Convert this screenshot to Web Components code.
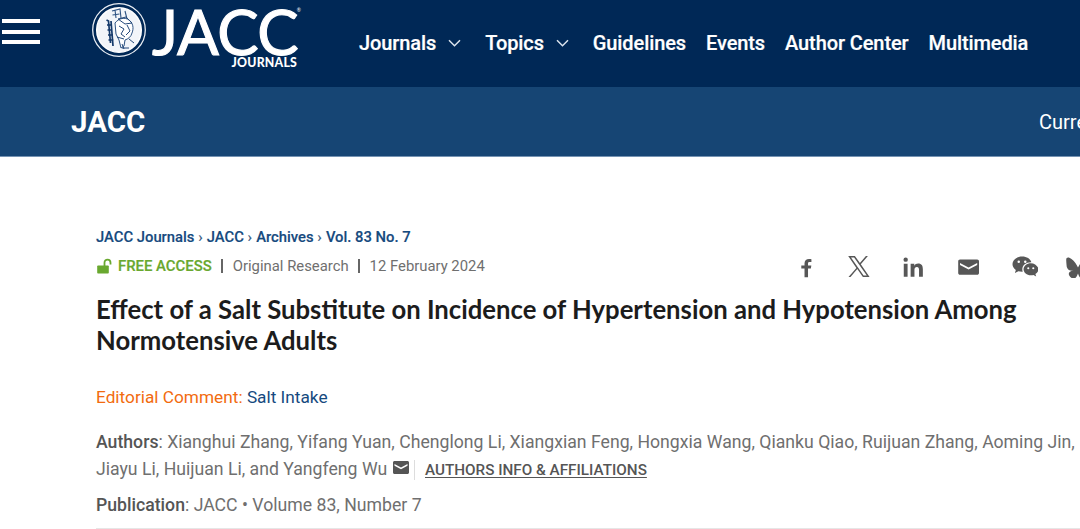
<!DOCTYPE html>
<html lang="en"><head><meta charset="utf-8"><title>JACC</title>
<style>
html,body{margin:0;padding:0;background:#fff;overflow:hidden;width:1080px;height:529px}
body{font-family:Roboto,"Liberation Sans",sans-serif}
</style></head><body>
<jacc-topbar></jacc-topbar>
<jacc-subbar></jacc-subbar>
<jacc-article></jacc-article>
<script>
function def(name,html){customElements.define(name,class extends HTMLElement{constructor(){super();this.attachShadow({mode:'open'}).innerHTML=html}})}
def('jacc-logo',`<style>
:host{display:flex;width:208px;height:66px;align-items:flex-start;gap:2px}
svg{flex:none;margin-top:1px}
.w{display:flex;flex-direction:column;align-items:flex-end;width:151px}
.j{font:400 62px/48px Lato,sans-serif;color:#fff;letter-spacing:-.6px;margin-top:6px;white-space:nowrap;position:relative;padding-right:2px;-webkit-text-stroke:1.100px #fff}
.j i{position:absolute;right:-1px;top:0;font:400 5px/6px Lato,sans-serif;letter-spacing:0;-webkit-text-stroke:0}
.s{font:900 12.300px/12px Lato,sans-serif;color:#fff;letter-spacing:.2px;margin:2px 3px 0 0}
</style>
<svg width="55" height="57" viewBox="0 0 55 57"><circle cx="27" cy="28" r="26.300" fill="none" stroke="#e8edf3" stroke-width="1.300"/><circle cx="27" cy="28" r="22.300" fill="#f2f5f9"/><circle cx="27" cy="28" r="22.300" fill="none" stroke="#fff" stroke-width="1.500"/>
<path d="M14.500 18l2 1 2 22M19 19l2 25M15 23h5M15.500 28h5M16 33h5M16.500 38h5" fill="none" stroke="#14396a" stroke-width="1.700"/>
<path d="M20 9l8-2 1 9M23 8l1 8M20.500 13l7-1M33 9l2 8" fill="none" stroke="#2c5282" stroke-width="1.100"/>
<path d="M23 21c4-5 10-6 14-3 4 3 5 8 3 13-1 4-4 6-7 7l-1 6-3 2-2-8-3-6z" fill="#fff" stroke="#2c5282" stroke-width="1"/>
<path d="M26 17l8-2 6 6-7 1zM27 24l5 3-3 5 4 3M35 23l3 6-4 4M25 35l7 2M30 42l2 5M37 37l5 4M30 46l7 0" fill="none" stroke="#24497a" stroke-width="1"/></svg>
<div class="w"><div class="j">JACC<i>®</i></div><div class="s">JOURNALS</div></div>`);
def('jacc-burger',`<style>:host{display:flex;flex-direction:column;gap:6.500px;width:38px;margin-top:19px;flex:none}i{display:block;height:4px;background:#fff}</style><i></i><i></i><i></i>`);
def('jacc-navitem',`<style>
:host{display:inline-flex;align-items:center;gap:12px;font:500 20px/24px Roboto,sans-serif;color:#fff;white-space:nowrap;letter-spacing:-.1px;-webkit-text-stroke:.2px #fff}
::slotted(svg){flex:none}
</style><slot></slot><slot name="i"></slot>`);
const chev='<svg slot="i" width="13" height="8" viewBox="0 0 13 8"><path d="M1 1.200l5.500 5.500 5.500-5.500" fill="none" stroke="#dbe4ee" stroke-width="1.500"/></svg>';
def('jacc-topbar',`<style>
:host{display:flex;height:87px;background:#002856;box-sizing:border-box;padding-left:2px;overflow:hidden}
jacc-logo{margin-left:52px;margin-top:1px}
nav{display:flex;gap:20px;margin-left:59px;padding-top:30.500px;align-items:flex-start}
.c{margin-right:4px}
</style><jacc-burger></jacc-burger><jacc-logo></jacc-logo>
<nav><jacc-navitem class="c">Journals${chev}</jacc-navitem><jacc-navitem class="c">Topics${chev}</jacc-navitem><jacc-navitem>Guidelines</jacc-navitem><jacc-navitem>Events</jacc-navitem><jacc-navitem>Author Center</jacc-navitem><jacc-navitem>Multimedia</jacc-navitem></nav>`);
def('jacc-subbar',`<style>
:host{display:flex;justify-content:space-between;align-items:center;height:70px;background:#164574;border-bottom:1px solid #7593b3;box-sizing:border-box;padding-left:71px;overflow:hidden;color:#fff}
b{font:700 29.500px/32px Roboto,sans-serif}
span{font:400 20px/24px Roboto,sans-serif;width:41px;overflow:hidden;white-space:nowrap}
</style><b>JACC</b><span>Current Issue</span>`);
def('jacc-share',`<style>
:host{display:flex;align-items:center;flex:none;width:283px;height:28px;margin:2px 0 0 auto;overflow:hidden}
svg{flex:none;fill:#575757}
</style>
<svg style="margin-left:3px" width="16" height="22" viewBox="0 0 16 22"><path d="M9.800 21v-9.500h3.100l.5-3.400H9.800V6c0-1 .4-1.600 1.700-1.600h2V1.400C12.900 1.300 12 1.200 10.900 1.200 8.200 1.200 6 2.800 6 5.800v2.300H2.500v3.400H6V21z" transform="translate(-1 2) scale(.92)"/></svg>
<svg style="margin-left:32px" width="22" height="22" viewBox="0 0 22 22"><path fill-rule="evenodd" d="M.2 0h6.700l5 7 6-7h2L12.800 8.200 21.600 21h-6.700l-5.600-7.900L2.500 21h-2l7.900-9zM3 1.400l12.600 18.200h3.200L6.100 1.400z"/></svg>
<svg style="margin-left:33px" width="21" height="22" viewBox="0 0 22 22"><path d="M2.800 0a2.300 2.300 0 1 1 0 4.600 2.300 2.300 0 0 1 0-4.600zM.8 6.700h4v13.500h-4zM8 6.700h3.800v1.900c.8-1.300 2.300-2.200 4.100-2.200 3.600 0 4.900 2.300 4.900 5.900v7.900h-4v-7c0-1.800-.3-3.300-2.300-3.300-1.900 0-2.500 1.400-2.500 3.200v7.100H8z" transform="translate(0 1)"/></svg>
<svg style="margin-left:34px" width="21" height="22" viewBox="0 0 21 22"><path d="M2 3.500h17.200c1 0 1.800.8 1.800 1.800V17c0 1-.8 1.800-1.800 1.800H2c-1 0-1.800-.8-1.800-1.800V5.300c0-1 .8-1.800 1.800-1.800zm0 3.400v2l8.600 4.600 8.600-4.600v-2l-8.600 4.500z" fill-rule="evenodd"/></svg>
<svg style="margin-left:33px" width="26" height="24" viewBox="0 0 27 24"><path fill-rule="evenodd" d="M10.500 1C5 1 .5 4.600.5 9c0 2.500 1.300 4.500 3.500 6.100L3 18.300l3.600-1.900c1.200.3 2.400.5 3.900.5h.6c-.3-.8-.4-1.600-.4-2.500 0-4.200 3.900-7.400 8.800-7.400h.6C19.200 3.500 15.300 1 10.500 1zM7 5.300a1.300 1.300 0 1 1 0 2.600 1.300 1.300 0 0 1 0-2.600zm6.800 0a1.300 1.300 0 1 1 0 2.600 1.300 1.300 0 0 1 0-2.600z"/><path fill-rule="evenodd" d="M19.500 8c-4 0-7.500 2.800-7.500 6.300s3.500 6.300 7.500 6.300c1 0 1.800-.2 2.800-.4l2.800 1.600-.8-2.600c2-1.300 3.200-3 3.200-4.900C27 10.800 23.500 8 19.500 8zm-2.600 4.200a1.100 1.100 0 1 1 0 2.200 1.100 1.100 0 0 1 0-2.200zm5.200 0a1.100 1.100 0 1 1 0 2.200 1.100 1.100 0 0 1 0-2.200z"/></svg>
<svg style="margin-left:27px" width="26" height="22" viewBox="0 0 26 22"><path d="M6.500 3C9.300 5 12 9 13 11.500 14 9 16.700 5 19.500 3c2-1.500 5.300-2.700 5.300 1 0 .8-.4 6.300-.7 7.200-.8 3-3.900 3.800-6.600 3.300 4.800.8 6 3.500 3.400 6.200-5 5.100-7.200-1.300-7.800-2.900-.1-.3-.1-.4-.1-.3 0-.1 0 0-.1.300-.6 1.600-2.800 8-7.800 2.900-2.600-2.700-1.400-5.400 3.400-6.200-2.700.5-5.800-.3-6.600-3.300C1.600 10.300 1.200 4.800 1.200 4c0-3.700 3.300-2.500 5.300-1z"/></svg>`);
def('jacc-crumbs',`<style>:host{display:block;font:500 14.800px/20px Roboto,sans-serif;color:#164a7e;white-space:nowrap;-webkit-text-stroke:.15px #164a7e}i{font-style:normal;color:#3f5f80;font-weight:400;letter-spacing:.5px}</style>JACC Journals <i>›</i> JACC <i>›</i> Archives <i>›</i> Vol. 83 No. 7`);
def('jacc-meta',`<style>
:host{display:flex;align-items:center;font:400 14.850px/20px Roboto,sans-serif;color:#6f6f6f;white-space:nowrap;height:20px;width:984px}
.fa{color:#69a82f;font-weight:500;margin-left:5px;font-size:14.900px;-webkit-text-stroke:.2px #69a82f}
.sep{width:2px;height:14px;background:#666;margin:0 10px 0 9px}
svg{flex:none}
</style>
<svg width="17" height="17" viewBox="0 0 17 17"><path fill="#69a82f" d="M1 7.500h10c.5 0 .8.400.8.800v6.400c0 .5-.3.800-.8.800H1c-.5 0-.8-.3-.8-.8V8.300c0-.4.300-.8.800-.8z" transform="translate(1 0)"/><path fill="none" stroke="#69a82f" stroke-width="1.800" d="M8.500 8V4.800c0-1.900 1.300-3.200 3-3.200s3 1.300 3 3.200V6.500"/></svg>
<span class="fa">FREE ACCESS</span><span class="sep"></span><span>Original Research</span><span class="sep"></span><span>12 February 2024</span><slot></slot>`);
def('jacc-author-line',`<style>:host{display:block;font:400 17.670px/27px Roboto,sans-serif;color:#6f6f6f;white-space:nowrap}::slotted(b){font-weight:500;color:#555}</style><slot></slot>`);
def('jacc-article',`<style>
:host{display:block;padding:70px 0 0 96px;height:302px;box-sizing:content-box;overflow:hidden}
jacc-meta{margin-top:9px}
h1{font:700 25.700px/31px Lato,sans-serif;color:#1c1c1c;margin:18px 0 0;width:960px}
.ed{font:400 17.250px/22px Roboto,sans-serif;margin-top:30px;color:#f26b0f;white-space:nowrap}
.ed a{color:#164a7e}
.au{margin-top:21px}
b{font-weight:500;color:#555}
.mail{display:inline-block;vertical-align:1px;margin-left:1px}
.v{display:inline-block;width:1px;height:20px;background:#ddd;margin:0 10.500px 0 5px;vertical-align:-5px}
.link{font-size:15.250px;font-weight:500;color:#555;text-decoration:underline;text-underline-offset:2px}
.pub{margin-top:8px}
hr{border:0;border-top:1px solid #e6e6e6;margin:8.500px 0 0;width:984px}
</style>
<jacc-crumbs></jacc-crumbs>
<jacc-meta><jacc-share></jacc-share></jacc-meta>
<h1>Effect of a Salt Substitute on Incidence of Hypertension and Hypotension Among Normotensive Adults</h1>
<div class="ed">Editorial Comment: <a>Salt Intake</a></div>
<jacc-author-line class="au"><b>Authors</b>: Xianghui Zhang, Yifang Yuan, Chenglong Li, Xiangxian Feng, Hongxia Wang, Qianku Qiao, Ruijuan Zhang, Aoming Jin,</jacc-author-line>
<jacc-author-line>Jiayu Li, Huijuan Li, and Yangfeng Wu <svg class="mail" width="16" height="13" viewBox="0 0 16 13"><path fill="#555" fill-rule="evenodd" d="M1.500 0h13c.8 0 1.500.7 1.500 1.500v10c0 .8-.7 1.500-1.500 1.500h-13C.7 13 0 12.300 0 11.500v-10C0 .7.700 0 1.500 0zM1.500 3v1.800L8 8.300l6.500-3.500V3L8 6.500z"/></svg><span class="v"></span><span class="link">AUTHORS INFO &amp; AFFILIATIONS</span></jacc-author-line>
<jacc-author-line class="pub"><b>Publication</b>: JACC • Volume 83, Number 7</jacc-author-line>
<hr>`);
</script>
</body></html>
